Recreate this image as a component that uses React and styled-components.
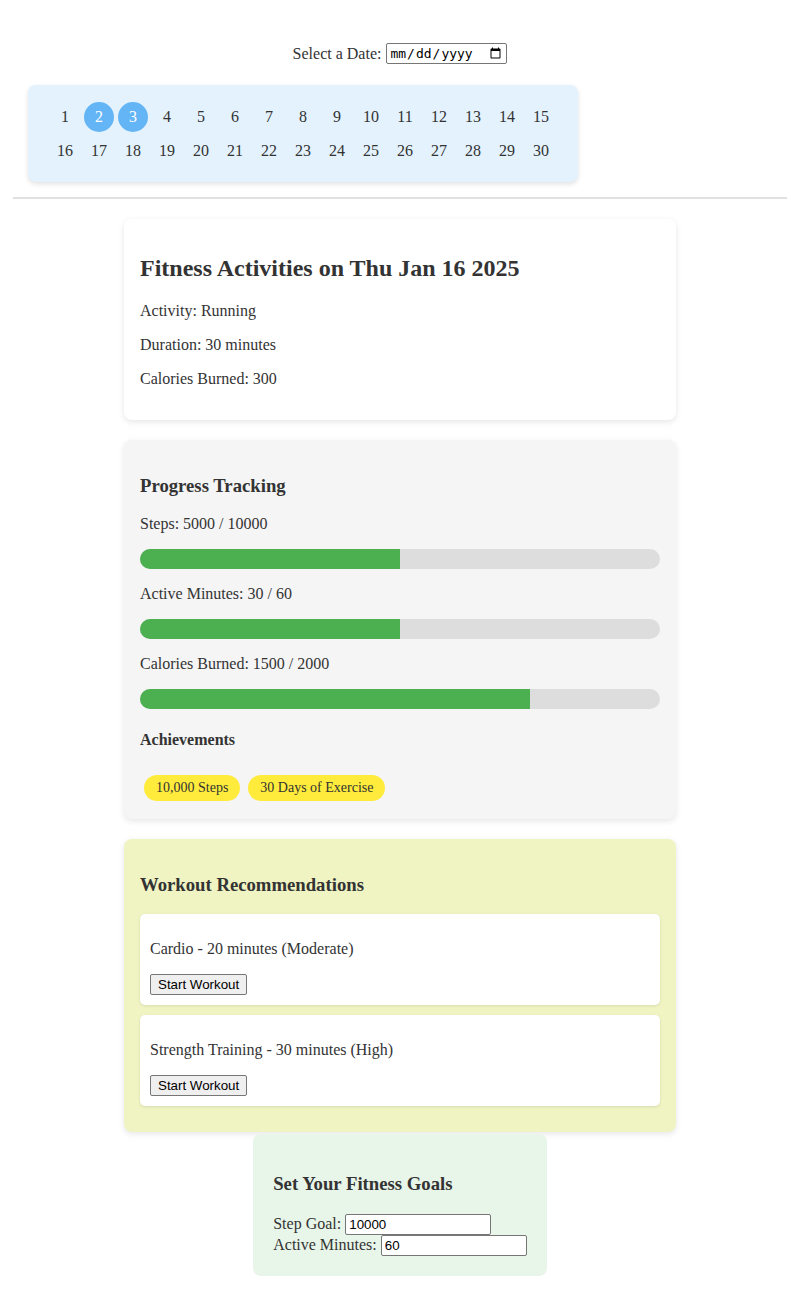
import React, { useState } from 'react';
import styled, { createGlobalStyle } from 'styled-components';

const GlobalStyle = createGlobalStyle`
  body {
    margin: 8px;
    font-family: "Liberation Serif", "Times New Roman", serif;
    font-size: 16px;
    color: #333;
    background: #fff;
  }
`;

const Header = styled.div`
  margin: 0 5px;
  padding-bottom: 15px;
  border-bottom: 2px solid #e0e0e0;
`;

const DateRow = styled.div`
  margin-top: 35px;
  display: flex;
  justify-content: center;
  align-items: center;
  gap: 5px;
`;

const DateInput = styled.input`
  font-family: "DejaVu Sans Mono", "Liberation Mono", monospace;
  font-size: 13px;
  width: 121px;
  height: 21px;
  box-sizing: border-box;
  padding: 1px 2px;
  border: 1px solid #767676;
  border-radius: 2px;
`;

const Calendar = styled.div`
  margin: 21px 0 0 15px;
  width: 510px;
  padding: 17px 20px 16px;
  background: #e3f2fd;
  border-radius: 8px;
  box-shadow: 0 2px 5px rgba(0, 0, 0, 0.12);
  display: grid;
  grid-template-columns: repeat(15, 30px);
  gap: 4px;
  justify-content: center;
`;

const Day = styled.div`
  width: 30px;
  height: 30px;
  display: flex;
  align-items: center;
  justify-content: center;
  border-radius: 50%;
  cursor: pointer;
  background: ${p => (p.$active ? '#64b5f6' : 'transparent')};
  color: ${p => (p.$active ? '#fff' : '#333')};
`;

const Card = styled.div`
  width: 520px;
  margin: 20px auto 0;
  padding: 16px;
  background: ${p => p.$bg || '#fff'};
  border-radius: 8px;
  box-shadow: 0 2px 6px rgba(0, 0, 0, 0.1);
`;

const Title = styled.h2`
  font-size: 24px;
  margin: 20px 0;
`;

const SubTitle = styled.h3`
  font-size: 18.72px;
  margin: 18.72px 0;
`;

const Text = styled.p`
  margin: 16px 0;
`;

const Bar = styled.div`
  height: 20px;
  background: #ddd;
  border-radius: 10px;
  overflow: hidden;
`;

const Fill = styled.div`
  height: 100%;
  background: #4caf50;
`;

const AchTitle = styled.h4`
  margin: 21.28px 0;
`;

const Badges = styled.div`
  display: flex;
`;

const Badge = styled.span`
  margin: 5px 4px 2px;
  padding: 5px 12px;
  font-size: 14px;
  line-height: 16px;
  background: #ffeb3b;
  border-radius: 15px;
`;

const Workout = styled.div`
  background: #fff;
  padding: 10px;
  margin-bottom: 10px;
  border-radius: 5px;
  box-shadow: 0 1px 3px rgba(0, 0, 0, 0.1);
`;

const Button = styled.button`
  font-family: "Liberation Sans", Arial, sans-serif;
  font-size: 13.33px;
  padding: 1px 7px;
  height: 21px;
  display: block;
  background: #efefef;
  border: 1px solid #767676;
  border-radius: 2px;
  color: #000;
`;

const Goals = styled.div`
  width: fit-content;
  margin: 2px auto 0;
  padding: 20px;
  background: #e8f5e9;
  border-radius: 8px;
`;

const GoalLine = styled.label`
  display: flex;
  align-items: center;
  gap: 4px;
  height: 21px;
`;

const TextInput = styled.input`
  font-family: "Liberation Sans", Arial, sans-serif;
  font-size: 13.33px;
  width: 146px;
  height: 21px;
  box-sizing: border-box;
  padding: 1px 3px;
  border: 1px solid #767676;
  border-radius: 2px;
  color: #000;
`;

const progress = [
  { label: 'Steps: 5000 / 10000', pct: 50 },
  { label: 'Active Minutes: 30 / 60', pct: 50 },
  { label: 'Calories Burned: 1500 / 2000', pct: 75 },
];

const workouts = [
  'Cardio - 20 minutes (Moderate)',
  'Strength Training - 30 minutes (High)',
];

export default function App() {
  const [steps, setSteps] = useState('10000');
  const [minutes, setMinutes] = useState('60');
  const days = Array.from({ length: 30 }, (_, i) => i + 1);

  return (
    <>
      <GlobalStyle />
      <Header>
        <DateRow>
          <span>Select a Date:</span>
          <DateInput type="date" />
        </DateRow>
        <Calendar>
          {days.map(d => (
            <Day key={d} $active={d === 2 || d === 3}>{d}</Day>
          ))}
        </Calendar>
      </Header>

      <Card>
        <Title>Fitness Activities on Thu Jan 16 2025</Title>
        <Text>Activity: Running</Text>
        <Text>Duration: 30 minutes</Text>
        <Text>Calories Burned: 300</Text>
      </Card>

      <Card $bg="#f5f5f5">
        <SubTitle>Progress Tracking</SubTitle>
        {progress.map(p => (
          <React.Fragment key={p.label}>
            <Text>{p.label}</Text>
            <Bar>
              <Fill style={{ width: `${p.pct}%` }} />
            </Bar>
          </React.Fragment>
        ))}
        <AchTitle>Achievements</AchTitle>
        <Badges>
          <Badge>10,000 Steps</Badge>
          <Badge>30 Days of Exercise</Badge>
        </Badges>
      </Card>

      <Card $bg="#f0f4c3">
        <SubTitle>Workout Recommendations</SubTitle>
        {workouts.map(w => (
          <Workout key={w}>
            <Text>{w}</Text>
            <Button>Start Workout</Button>
          </Workout>
        ))}
      </Card>

      <Goals>
        <SubTitle>Set Your Fitness Goals</SubTitle>
        <GoalLine>
          Step Goal:
          <TextInput value={steps} onChange={e => setSteps(e.target.value)} />
        </GoalLine>
        <GoalLine>
          Active Minutes:
          <TextInput value={minutes} onChange={e => setMinutes(e.target.value)} />
        </GoalLine>
      </Goals>
    </>
  );
}
